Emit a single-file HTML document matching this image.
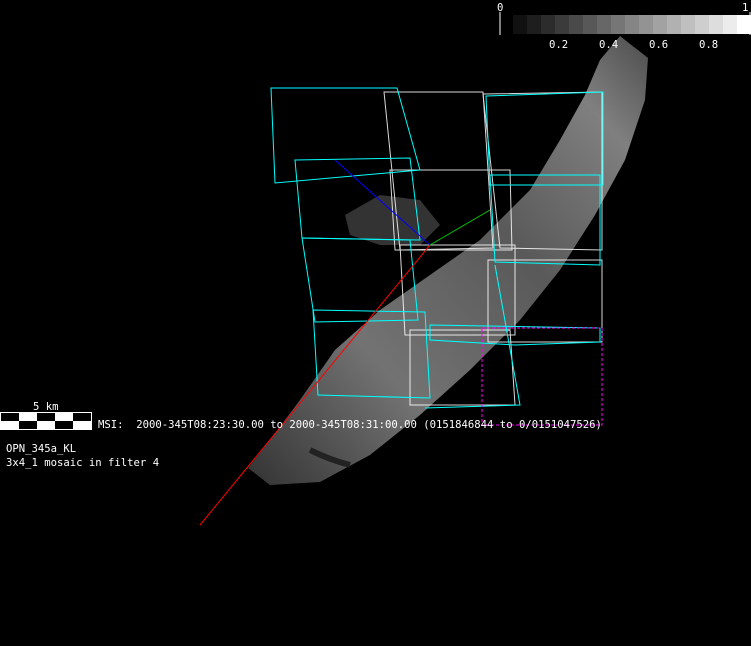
<!DOCTYPE html><html><head><style>html,body{margin:0;padding:0;background:#000;width:751px;height:646px;overflow:hidden}
svg{position:absolute;left:0;top:0}
.t{font-family:"DejaVu Sans Mono","Liberation Mono",monospace;font-size:10.6px;fill:#fff}</style></head><body>
<svg width="751" height="646" viewBox="0 0 751 646">
<defs><linearGradient id="g" x1="0" y1="1" x2="1" y2="0">
<stop offset="0" stop-color="#444"/><stop offset="0.3" stop-color="#999"/><stop offset="0.6" stop-color="#777"/><stop offset="0.85" stop-color="#aaa"/><stop offset="1" stop-color="#666"/></linearGradient></defs>
<path d="M620,36 L648,58 L645,100 L625,160 L595,215 L560,270 L520,320 L470,370 L420,415 L370,455 L320,482 L270,485 L248,468 L270,440 L300,400 L335,350 L380,310 L430,275 L480,240 L530,190 L560,140 L585,95 L600,60 Z" fill="url(#g)" opacity="0.75"/>
<path d="M345,215 L380,195 L420,200 L440,225 L420,245 L380,245 L350,235 Z" fill="#333"/>
<path d="M310,450 Q330,460 350,465" stroke="#222" stroke-width="6" fill="none"/>
<g fill="none" stroke="#fff" stroke-width="1" opacity="0.85">
<path d="M384,92 L483,92 L493,248 L400,250 Z"/>
<path d="M483,94 L602,92 L602,250 L500,248 Z"/>
<path d="M390,170 L510,170 L512,250 L395,250 Z"/>
<path d="M400,245 L515,245 L515,335 L405,335 Z"/>
<path d="M488,260 L602,260 L602,342 L488,342 Z"/>
<path d="M410,330 L510,330 L515,405 L410,405 Z"/>
</g>
<g fill="none" stroke="#0ff" stroke-width="1">
<path d="M271,88 L397,88 L420,170 L275,183 Z"/>
<path d="M295,160 L410,158 L420,240 L302,238 Z"/>
<path d="M302,238 L410,240 L418,320 L315,322 Z"/>
<path d="M313,310 L425,312 L430,398 L318,395 Z"/>
<path d="M486,96 L603,92 L603,185 L490,185 Z"/>
<path d="M490,175 L600,175 L600,265 L495,262 Z"/>
<path d="M430,325 L600,328 L600,342 L515,345 L430,340 Z"/>
<path d="M495,265 L520,405 L425,408"/>
</g>
<path d="M482,328 L602,328 L602,425 L482,425 Z" fill="none" stroke="#f0f" stroke-dasharray="3,2"/>
<line x1="200" y1="525" x2="430" y2="245" stroke="#f00"/>
<line x1="430" y1="245" x2="335" y2="160" stroke="#00f"/>
<line x1="430" y1="245" x2="490" y2="210" stroke="#0c0"/>
<g>
<rect x="513" y="15" width="238" height="19" fill="#fff"/>
<rect x="513" y="15" width="14" height="19" fill="#111"/><rect x="527" y="15" width="14" height="19" fill="#1e1e1e"/><rect x="541" y="15" width="14" height="19" fill="#2c2c2c"/><rect x="555" y="15" width="14" height="19" fill="#3b3b3b"/><rect x="569" y="15" width="14" height="19" fill="#4a4a4a"/><rect x="583" y="15" width="14" height="19" fill="#585858"/><rect x="597" y="15" width="14" height="19" fill="#676767"/><rect x="611" y="15" width="14" height="19" fill="#767676"/><rect x="625" y="15" width="14" height="19" fill="#858585"/><rect x="639" y="15" width="14" height="19" fill="#939393"/><rect x="653" y="15" width="14" height="19" fill="#a2a2a2"/><rect x="667" y="15" width="14" height="19" fill="#b1b1b1"/><rect x="681" y="15" width="14" height="19" fill="#bfbfbf"/><rect x="695" y="15" width="14" height="19" fill="#cecece"/><rect x="709" y="15" width="14" height="19" fill="#dddddd"/><rect x="723" y="15" width="14" height="19" fill="#ececec"/>
<line x1="500" y1="12" x2="500" y2="35" stroke="#fff"/><line x1="750" y1="12" x2="750" y2="35" stroke="#fff"/>
<text class="t" x="497" y="11">0</text><text class="t" x="742" y="11">1</text>
<text class="t" x="549" y="48">0.2</text><text class="t" x="599" y="48">0.4</text><text class="t" x="649" y="48">0.6</text><text class="t" x="699" y="48">0.8</text>
</g>
<rect x="0.5" y="412.5" width="91" height="17" fill="#fff" stroke="#fff"/>
<g fill="#000"><rect x="1" y="413" width="18" height="8"/><rect x="37" y="413" width="18" height="8"/><rect x="73" y="413" width="18" height="8"/><rect x="19" y="421" width="18" height="8"/><rect x="55" y="421" width="18" height="8"/></g>
<text class="t" x="33" y="410">5 km</text>
<text class="t" x="98" y="428" xml:space="preserve">MSI:  2000-345T08:23:30.00 to 2000-345T08:31:00.00 (0151846844 to 0/0151047526)</text>
<text class="t" x="6" y="452">OPN_345a_KL</text>
<text class="t" x="6" y="466">3x4_1 mosaic in filter 4</text>
</svg></body></html>
